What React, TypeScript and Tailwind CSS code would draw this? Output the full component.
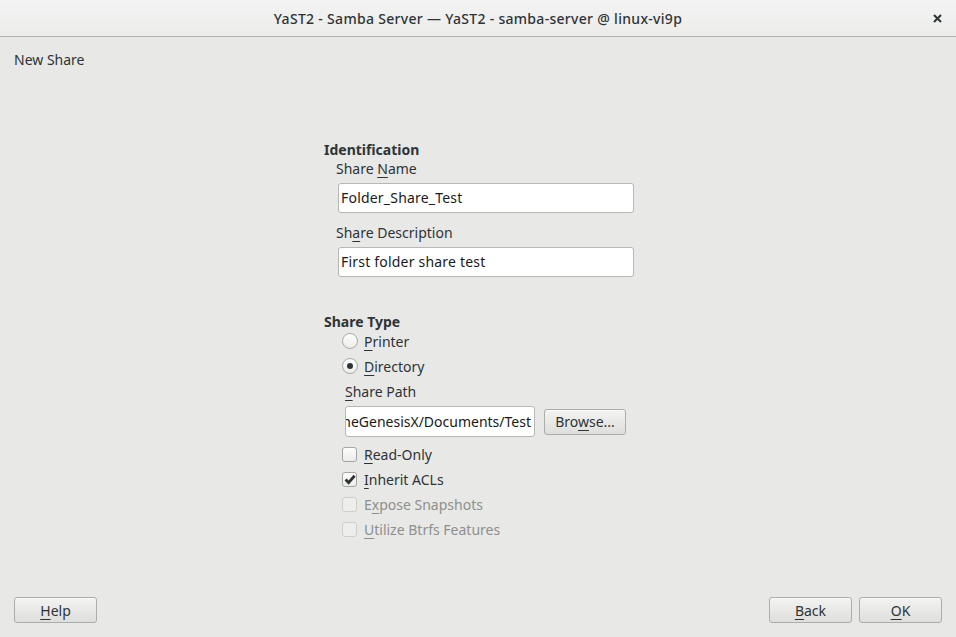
import React from "react";

const font = { fontFamily: '"Noto Sans", "Open Sans", sans-serif' };

function Mn({ children }: { children: React.ReactNode }) {
  return <span className="underline underline-offset-[3px] decoration-1">{children}</span>;
}

function Button({ children, className = "" }: { children: React.ReactNode; className?: string }) {
  return (
    <div
      className={`flex h-[26px] items-center justify-center rounded-[3px] border border-[#acaeab] bg-gradient-to-b from-[#f3f3f2] to-[#dededd] text-[14px] text-[#2e3436] shadow-[inset_0_1px_0_#fafafa] ${className}`}
    >
      {children}
    </div>
  );
}

function Field({ value }: { value: string }) {
  return (
    <div className="ml-[14px] flex h-[30px] w-[296px] items-center rounded-[3px] border border-[#b6b8b4] bg-white pb-[1px] pl-[2px] text-[14px] tracking-[0.2px] text-[#1a1a1a]">
      {value}
    </div>
  );
}

function Radio({ checked, children }: { checked?: boolean; children: React.ReactNode }) {
  return (
    <div className="ml-[18px] flex h-[20px] items-center gap-[6px] text-[14px] text-[#2e3436]">
      <div className="flex h-[16px] w-[16px] items-center justify-center rounded-full border border-[#a9aba7] bg-gradient-to-b from-[#fdfdfd] to-[#ececeb]">
        {checked && <div className="h-[6px] w-[6px] rounded-full bg-[#2e3436]" />}
      </div>
      <span>{children}</span>
    </div>
  );
}

function Check({
  checked,
  disabled,
  children,
}: {
  checked?: boolean;
  disabled?: boolean;
  children: React.ReactNode;
}) {
  return (
    <div
      className={`ml-[18px] flex h-[20px] items-center gap-[7px] text-[14px] ${
        disabled ? "text-[#8d908c]" : "text-[#2e3436]"
      }`}
    >
      <div
        className={`flex h-[15px] w-[15px] items-center justify-center rounded-[3px] border ${
          disabled
            ? "border-[#cdcfcb] bg-[#eeeeed]"
            : "border-[#a3a5a1] bg-gradient-to-b from-[#fdfdfd] to-[#ececeb]"
        }`}
      >
        {checked && (
          <svg width="12" height="11" viewBox="0 0 12 11">
            <path d="M1.6 5.6 L4.6 8.6 L10.6 1.8" fill="none" stroke="#2e3436" strokeWidth="2.8" />
          </svg>
        )}
      </div>
      <span>{children}</span>
    </div>
  );
}

export default function App() {
  return (
    <div className="flex h-[637px] w-[956px] flex-col overflow-hidden bg-[#e8e8e7]" style={font}>
      <div className="relative flex h-[37px] shrink-0 items-center justify-center border-b border-[#b2b3b0] bg-gradient-to-b from-[#f3f3f3] to-[#ececeb]">
        <span className="text-[14px] font-medium tracking-[0.3px] text-[#2e3436]">
          YaST2 - Samba Server — YaST2 - samba-server @ linux-vi9p
        </span>
        <svg className="absolute right-[14px] top-[14px]" width="9" height="9" viewBox="0 0 9 9">
          <path d="M1 1 L8 8 M8 1 L1 8" stroke="#2e3436" strokeWidth="2" />
        </svg>
      </div>

      <div className="flex flex-1 flex-col px-[14px] pb-[14px]">
        <div className="mt-[13px] h-[19px] pl-[-1px] text-[14px] leading-[19px] text-[#2e3436]">New Share</div>

        <div className="flex flex-1 justify-center">
          <div className="ml-[2px] mt-[71px] w-[310px] text-[14px] leading-[19px] text-[#2e3436]">
            <div className="font-bold">Identification</div>
            <div className="ml-[12px]">
              Share <Mn>N</Mn>ame
            </div>
            <div className="mt-[5px]">
              <Field value="Folder_Share_Test" />
            </div>
            <div className="ml-[12px] mt-[10px]">
              Sh<Mn>a</Mn>re Description
            </div>
            <div className="mt-[5px]">
              <Field value="First folder share test" />
            </div>

            <div className="mt-[35px] font-bold">Share Type</div>
            <Radio>
              <Mn>P</Mn>rinter
            </Radio>
            <div className="mt-[5px]">
              <Radio checked>
                <Mn>D</Mn>irectory
              </Radio>
            </div>
            <div className="ml-[21px] mt-[6px]">
              <Mn>S</Mn>hare Path
            </div>
            <div className="ml-[21px] mt-[5px] flex items-center gap-[9px]">
              <div className="flex h-[31px] w-[190px] items-center justify-end overflow-hidden whitespace-nowrap rounded-[3px] border border-[#b6b8b4] bg-white pr-[3px] text-[#1a1a1a]">
                /home/TheGenesisX/Documents/Test
              </div>
              <Button className="w-[82px]">
                <span>
                  Bro<Mn>w</Mn>se...
                </span>
              </Button>
            </div>
            <div className="mt-[7px] flex flex-col gap-[5px]">
              <Check>
                <Mn>R</Mn>ead-Only
              </Check>
              <Check checked>
                <Mn>I</Mn>nherit ACLs
              </Check>
              <Check disabled>
                E<Mn>x</Mn>pose Snapshots
              </Check>
              <Check disabled>
                <Mn>U</Mn>tilize Btrfs Features
              </Check>
            </div>
          </div>
        </div>

        <div className="flex items-center justify-between">
          <Button className="w-[83px]">
            <span>
              <Mn>H</Mn>elp
            </span>
          </Button>
          <div className="flex gap-[7px]">
            <Button className="w-[83px]">
              <span>
                <Mn>B</Mn>ack
              </span>
            </Button>
            <Button className="w-[83px]">
              <span>
                <Mn>O</Mn>K
              </span>
            </Button>
          </div>
        </div>
      </div>
    </div>
  );
}
